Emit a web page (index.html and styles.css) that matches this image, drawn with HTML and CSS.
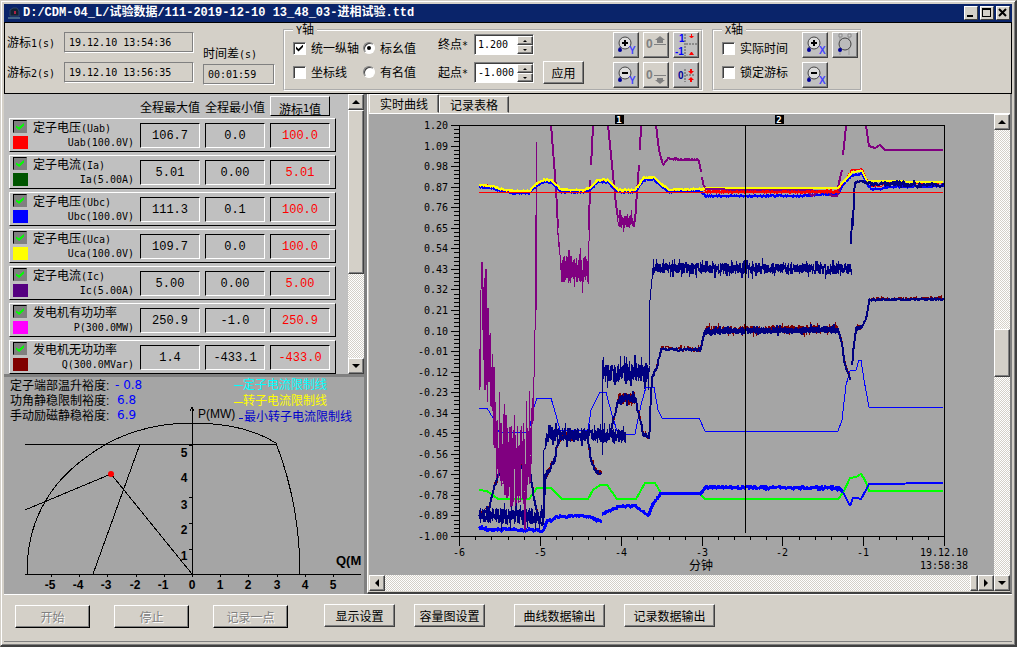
FILE: index.html
```
<!DOCTYPE html>
<html lang="zh-CN">
<head>
	<meta charset="utf-8">
	<title>进相试验</title>
	<link rel="stylesheet" href="styles.css">
</head>
<body>

<div class="window">

	<header class="titlebar">
		<svg class="app-icon" width="14" height="14" viewBox="0 0 14 14">
			<path d="M3 10V4l3-2h4l2 3v5z" fill="#123" stroke="#346" />
			<path d="M1 11h12v2H1z" fill="#468" />
			<path d="M7 5h2v3H7z" fill="#a24" />
		</svg>
		<h1>D:/CDM-04_L/试验数据/111-2019-12-10 13_48_03-进相试验.ttd</h1>
		<button class="win-btn" aria-label="最小化"><svg width="10" height="10"><path d="M1 7h6v2H1z"/></svg></button>
		<button class="win-btn" aria-label="最大化"><svg width="10" height="10"><path d="M0 0h9v9H0zM1 2v6h7V2z" fill-rule="evenodd"/></svg></button>
		<button class="win-btn" aria-label="关闭"><svg width="10" height="10"><path d="M1 1l7 7M8 1l-7 7" stroke="#000" stroke-width="2"/></svg></button>
	</header>

	<section class="toolbar">
		<div class="cursors">
			<label for="c1">游标<span class="en">1(s)</span></label>
			<input class="field" id="c1" value="19.12.10 13:54:36" readonly>
			<label for="c2">游标<span class="en">2(s)</span></label>
			<input class="field" id="c2" value="19.12.10 13:56:35" readonly>
		</div>
		<div class="diff">
			<label for="diff">时间差<span class="en">(s)</span></label>
			<input class="field" id="diff" value="00:01:59" readonly>
		</div>

		<fieldset class="axis-y">
			<legend><span class="en">Y</span>轴</legend>
			<div class="group">
				<div class="options">
					<label><input type="checkbox" class="box" checked>统一纵轴</label>
					<label><input type="checkbox" class="box">坐标线</label>
				</div>
				<div class="options radios">
					<label><input type="radio" name="unit" class="dot" checked>标幺值</label>
					<label><input type="radio" name="unit" class="dot">有名值</label>
				</div>
				<div class="ranges">
					<label for="end">终点<span class="en">*</span></label>
					<div class="spin">
						<input id="end" value="1.200">
						<div class="steps"><button class="up" aria-label="增"></button><button class="down" aria-label="减"></button></div>
					</div>
					<label for="start">起点<span class="en">*</span></label>
					<div class="spin">
						<input id="start" value="-1.000">
						<div class="steps"><button class="up" aria-label="增"></button><button class="down" aria-label="减"></button></div>
					</div>
				</div>
				<button class="btn apply">应用</button>
				<div class="tools">
					<button class="tool" aria-label="纵轴放大">
						<svg width="24" height="24" viewBox="0 0 24 24">
							<circle cx="11" cy="10" r="6" class="lens"/><path d="M8 10h6M11 7v6" class="sign"/>
							<path d="M7 14l-2 2" class="handle"/><circle cx="6" cy="17" r="2" class="knob"/>
							<text x="15" y="21" class="axis">Y</text>
						</svg>
					</button>
					<button class="tool flat" aria-label="零点上移">
						<svg width="24" height="24" viewBox="0 0 24 24">
							<text x="2" y="15" class="zero">0</text>
							<path d="M10 11h12v1H10zM11 7l5-4 5 4h-2v3h-6V7z" fill="#808080"/>
						</svg>
					</button>
					<button class="tool" aria-label="恢复范围">
						<svg width="24" height="24" viewBox="0 0 24 24">
							<text x="5" y="9" class="num">1</text><text x="1" y="22" class="num">-1</text>
							<path d="M11 1v22M12 11h11" stroke="#555" stroke-dasharray="2 1"/>
							<path d="M15 3h5l-2 2h-1zM17 1h1v2h-1zM15 22h5l-2-3h-1z" fill="#f00"/>
						</svg>
					</button>
					<button class="tool" aria-label="纵轴缩小">
						<svg width="24" height="24" viewBox="0 0 24 24">
							<circle cx="11" cy="10" r="6" class="lens"/><path d="M8 10h6" class="sign"/>
							<path d="M7 14l-2 2" class="handle"/><circle cx="6" cy="17" r="2" class="knob"/>
							<text x="15" y="21" class="axis">Y</text>
						</svg>
					</button>
					<button class="tool flat" aria-label="零点下移">
						<svg width="24" height="24" viewBox="0 0 24 24">
							<text x="2" y="16" class="zero">0</text>
							<path d="M10 12h12v1H10zM11 17h2v-2h6v2h2l-5 4z" fill="#808080"/>
						</svg>
					</button>
					<button class="tool" aria-label="归零">
						<svg width="24" height="24" viewBox="0 0 24 24">
							<text x="4" y="16" class="num dark">0</text>
							<path d="M11 6v13M12 12h9" stroke="#555" stroke-dasharray="2 1"/>
							<path d="M14 8h2V6h2v2h2l-3 3zM14 17h2v2h2v-2h2l-3-3z" fill="#f00"/>
						</svg>
					</button>
				</div>
			</div>
		</fieldset>

		<fieldset class="axis-x">
			<legend><span class="en">X</span>轴</legend>
			<div class="group">
				<div class="options">
					<label><input type="checkbox" class="box">实际时间</label>
					<label><input type="checkbox" class="box">锁定游标</label>
				</div>
				<div class="tools two">
					<button class="tool" aria-label="横轴放大">
						<svg width="24" height="24" viewBox="0 0 24 24">
							<circle cx="11" cy="10" r="6" class="lens"/><path d="M8 10h6M11 7v6" class="sign"/>
							<path d="M7 14l-2 2" class="handle"/><circle cx="6" cy="17" r="2" class="knob"/>
							<text x="16" y="21" class="axis">X</text>
						</svg>
					</button>
					<button class="tool" aria-label="游标区间放大">
						<svg width="24" height="24" viewBox="0 0 24 24">
							<path d="M7 4v18M16 4v18" stroke="#999"/><path d="M6 1h3v3H6zM15 1h3v3h-3z" fill="#ccc" stroke="#888"/>
							<circle cx="12" cy="11" r="6" class="lens wide"/>
							<path d="M8 15l-1 1" class="handle"/><circle cx="7" cy="17" r="2" class="knob"/>
						</svg>
					</button>
					<button class="tool" aria-label="横轴缩小">
						<svg width="24" height="24" viewBox="0 0 24 24">
							<circle cx="11" cy="10" r="6" class="lens"/><path d="M8 10h6" class="sign"/>
							<path d="M7 14l-2 2" class="handle"/><circle cx="6" cy="17" r="2" class="knob"/>
							<text x="16" y="21" class="axis">X</text>
						</svg>
					</button>
				</div>
			</div>
		</fieldset>
	</section>

	<main>
		<aside>
			<div class="list">
				<table>
					<thead>
						<tr><th></th><th>全程最大值</th><th>全程最小值</th><th class="key">游标<span class="en">1</span>值</th></tr>
					</thead>
					<tbody>
						<tr>
							<th><input type="checkbox" id="s1" checked><label for="s1">定子电压<span class="en">(Uab)</span></label><i class="red"></i><span class="en unit">Uab(100.0V)</span></th>
							<td>106.7</td><td>0.0</td><td>100.0</td>
						</tr>
						<tr>
							<th><input type="checkbox" id="s2" checked><label for="s2">定子电流<span class="en">(Ia)</span></label><i class="green"></i><span class="en unit">Ia(5.00A)</span></th>
							<td>5.01</td><td>0.00</td><td>5.01</td>
						</tr>
						<tr>
							<th><input type="checkbox" id="s3" checked><label for="s3">定子电压<span class="en">(Ubc)</span></label><i class="blue"></i><span class="en unit">Ubc(100.0V)</span></th>
							<td>111.3</td><td>0.1</td><td>100.0</td>
						</tr>
						<tr>
							<th><input type="checkbox" id="s4" checked><label for="s4">定子电压<span class="en">(Uca)</span></label><i class="yellow"></i><span class="en unit">Uca(100.0V)</span></th>
							<td>109.7</td><td>0.0</td><td>100.0</td>
						</tr>
						<tr>
							<th><input type="checkbox" id="s5" checked><label for="s5">定子电流<span class="en">(Ic)</span></label><i class="indigo"></i><span class="en unit">Ic(5.00A)</span></th>
							<td>5.00</td><td>0.00</td><td>5.00</td>
						</tr>
						<tr>
							<th><input type="checkbox" id="s6" checked><label for="s6">发电机有功功率</label><i class="magenta"></i><span class="en unit">P(300.0MW)</span></th>
							<td>250.9</td><td>-1.0</td><td>250.9</td>
						</tr>
						<tr>
							<th><input type="checkbox" id="s7" checked><label for="s7">发电机无功功率</label><i class="maroon"></i><span class="en unit">Q(300.0MVar)</span></th>
							<td>1.4</td><td>-433.1</td><td>-433.0</td>
						</tr>
					</tbody>
				</table>
				<div class="scroll vertical">
					<button class="up" aria-label="上"></button>
					<div class="thumb"></div>
					<div class="track"></div>
					<button class="down" aria-label="下"></button>
				</div>
			</div>

			<!-- P-Q capability diagram -->
			<svg class="capacity" viewBox="4 377 360 216">
				<g class="notes">
					<text x="10" y="390">定子端部温升裕度:</text><text x="115" y="389" class="value">- 0.8</text>
					<text x="10" y="405">功角静稳限制裕度:</text><text x="117" y="404" class="value">6.8</text>
					<text x="10" y="420">手动励磁静稳裕度:</text><text x="117" y="419" class="value">6.9</text>
					<g fill="#0ff"><path d="M234 385h9v1h-9z"/><text x="243" y="389">定子电流限制线</text></g>
					<g fill="#ff0"><path d="M234 402h9v1h-9z"/><text x="243" y="405">转子电流限制线</text></g>
					<g fill="#00c"><path d="M239 418h4v1h-4z"/><text x="244" y="421">最小转子电流限制线</text></g>
				</g>
				<g class="thin">
					<path d="M25 574H361M192 408V574M25 444H276"/>
					<path d="M190 411l2-4 2 4"/>
					<path d="M27 574C27 548 33 522 45 502C58 478 82 458 108 443C135 429 166 423 192 423C220 423 252 428 276 443C291 482 300 528 300 574"/>
					<path d="M140 444L93 574M25 510L111 474L192 574"/>
					<path d="M189 445h3M189 497h3M189 523h3M189 549h3"/>
					<path id="pqTicks"/>
				</g>
				<circle cx="111" cy="474" r="3" fill="#f00"/>
				<g class="scale" id="pqLabels">
					<text x="184" y="457">5</text><text x="184" y="482">4</text><text x="184" y="509">3</text>
					<text x="184" y="534">2</text><text x="184" y="560">1</text>
				</g>
				<text x="198" y="418" class="name">P(MW)</text>
				<text x="336" y="565" class="name big">Q(M</text>
			</svg>
		</aside>

		<section class="view">
			<div class="tabs" role="tablist">
				<button role="tab" class="tab active" aria-selected="true">实时曲线</button>
				<button role="tab" class="tab" aria-selected="false">记录表格</button>
			</div>
			<div class="plot">
				<svg class="chart" id="chart" viewBox="369 114 625 461">
					<g id="curves"></g>
					<path class="line" id="grid" d="M459 125H944V536M459 125V536H944M745 125V533"/>
					<g id="labels"></g>
					<path d="M615 115h9v9h-9zM775 115h9v9h-9z"/>
					<g class="marks"><text x="619" y="123">1</text><text x="779" y="123">2</text></g>
					<text class="cjk" x="701" y="570">分钟</text>
				</svg>
				<div class="scroll vertical right">
					<button class="up" aria-label="上"></button>
					<div class="track"></div>
					<div class="thumb"></div>
					<div class="track"></div>
				</div>
				<div class="scroll horizontal">
					<button class="left" aria-label="左"></button>
					<div class="track"></div>
					<div class="thumb"></div>
					<button class="next" aria-label="右"></button>
				</div>
				<div class="scroll"><button class="down" aria-label="下"></button></div>
			</div>
		</section>
	</main>

	<footer>
		<div class="run">
			<button class="btn" disabled>开始</button>
			<button class="btn" disabled>停止</button>
			<button class="btn" disabled>记录一点</button>
		</div>
		<div class="setup">
			<button class="btn">显示设置</button>
			<button class="btn">容量图设置</button>
		</div>
		<div class="export">
			<button class="btn">曲线数据输出</button>
			<button class="btn">记录数据输出</button>
		</div>
	</footer>

</div>

<script src="chart.js"></script>
</body>
</html>
```
FILE: styles.css
```
*{
	box-sizing: border-box;
}
body{
	margin: 0;
	background: #d4d0c8;
	color: #000;
	font: 12px/14px "Noto Sans CJK SC", sans-serif;
}
button, input{
	font: inherit;
	color: inherit;
	margin: 0;
	padding: 0;
	border-radius: 0;
}
button{
	background: #d4d0c8;
}
svg{
	display: block;
}
.en{
	font-family: "DejaVu Sans Mono", monospace;
	font-size: 10px;
}

/* window frame */
.window{
	display: flex;
	flex-direction: column;
	min-height: 100vh;
	padding: 3px 3px 3px 3px;
	border: 1px solid #404040;
	border-width: 1px 2px 2px 1px;
	border-top-color: #d4d0c8;
	border-left-color: #d4d0c8;
	box-shadow: inset 1px 1px #fff, inset -1px -1px #808080;
}
.titlebar{
	display: flex;
	align-items: center;
	gap: 2px;
	height: 18px;
	padding: 0 2px 0 3px;
	background: #0a246a;
	color: #fff;
}
.titlebar h1{
	flex: 1;
	margin: 0;
	font: bold 12px/18px "Liberation Mono", "Noto Sans CJK SC", monospace;
	white-space: nowrap;
}
.win-btn{
	width: 14px;
	height: 14px;
	padding: 1px;
	border: 1px solid;
	border-color: #fff #404040 #404040 #fff;
}

/* toolbar */
.toolbar{
	display: flex;
	align-items: flex-start;
	height: 72px;
	padding-left: 2px;
	border: 1px solid #000;
}
.cursors{
	display: grid;
	grid-template-columns: 57px 130px;
	row-gap: 9px;
	padding-top: 9px;
	align-items: center;
}
.field{
	height: 21px;
	padding: 0 4px;
	background: none;
	border: 1px solid;
	border-color: #808080 #fff #fff #808080;
	outline: 0;
	box-shadow: inset -1px -1px #808080;
	font: 10px "DejaVu Sans Mono", monospace;
}
.diff{
	display: flex;
	flex-direction: column;
	gap: 2px;
	width: 72px;
	margin: 23px 8px 0 9px;
}
.diff .field{
	width: 100%;
}
fieldset{
	min-width: 0;
	margin: 0;
	padding: 0 2px 1px 8px;
	border: 2px groove #fff;
}
legend{
	padding: 0 3px;
	line-height: 12px;
}
.axis-x{
	margin-left: 9px;
}
.group{
	display: flex;
	align-items: flex-start;
	margin-top: -5px;
	white-space: nowrap;
}
.options{
	display: flex;
	flex-direction: column;
	gap: 10px;
	width: 70px;
	padding-top: 9px;
}
.options label{
	display: flex;
	align-items: center;
	gap: 5px;
}
.radios{
	width: 75px;
}
.box, .dot{
	appearance: none;
	flex: none;
	width: 13px;
	height: 13px;
	background: #fff;
	border: 1px solid;
	border-color: #808080 #fff #fff #808080;
	box-shadow: inset 1px 1px #404040;
}
.box:checked::before{
	content: "";
	display: block;
	width: 7px;
	height: 7px;
	margin: 2px;
	background: #000;
	clip-path: polygon(0 28%, 36% 64%, 100% 0, 100% 36%, 36% 100%, 0 64%);
}
.dot{
	width: 12px;
	height: 12px;
	border-radius: 50%;
}
.dot:checked::before{
	content: "";
	display: block;
	width: 4px;
	height: 4px;
	margin: 3px;
	background: #000;
	border-radius: 50%;
}
.ranges{
	display: grid;
	grid-template-columns: 36px 60px;
	row-gap: 7px;
	align-items: center;
	padding-top: 2px;
}
.spin{
	display: flex;
	height: 21px;
	background: #fff;
	border: 1px solid;
	border-color: #808080 #fff #fff #808080;
	box-shadow: inset 1px 1px #404040;
}
.spin input{
	flex: 1;
	min-width: 0;
	padding-left: 3px;
	background: none;
	border: 0;
	font: 10px "DejaVu Sans Mono", monospace;
}
.steps{
	width: 16px;
	padding-top: 1px;
}
.steps button{
	width: 16px;
	height: 9px;
}
.btn{
	height: 23px;
	padding: 0;
	border: 1px solid;
	border-color: #fff #404040 #404040 #fff;
	box-shadow: inset -1px -1px #808080;
}
.btn:disabled{
	color: #808080;
	text-shadow: 1px 1px #fff;
	border-color: #fff #000 #000 #fff;
}
.apply{
	width: 41px;
	margin: 29px 29px 0 9px;
}
.tools{
	display: grid;
	grid-template-columns: repeat(3, 26px);
	gap: 4px;
}
.tools.two{
	grid-template-columns: repeat(2, 26px);
	margin-left: 10px;
}
.tool{
	height: 26px;
	background: #c0c0c0;
	border: 1px solid;
	border-color: #fff #404040 #404040 #fff;
	box-shadow: inset -1px -1px #808080;
}
.tool.flat{
	background: #d4d0c8;
}
.lens{
	fill: #ddd;
	stroke: #444;
	stroke-width: 1px;
}
.wide{
	fill: #bbb;
}
.sign{
	stroke: #000;
	stroke-width: 2px;
	shape-rendering: crispEdges;
}
.handle{
	stroke: #448;
	stroke-width: 2px;
}
.knob{
	fill: #009;
}
.axis{
	fill: #44f;
	font: bold 10px "Liberation Sans", sans-serif;
}
.zero{
	fill: #808080;
	font: bold 12px "Liberation Sans", sans-serif;
}
.num{
	fill: #00f;
	font: bold 10px "Liberation Sans", sans-serif;
}
.num.dark{
	fill: #009;
}

/* scrollbars */
.scroll{
	display: flex;
}
.vertical{
	flex-direction: column;
}
.scroll button, .steps button, .thumb{
	display: flex;
	flex: none;
	align-items: center;
	justify-content: center;
	background: #d4d0c8;
	border: 1px solid;
	border-color: #fff #404040 #404040 #fff;
	box-shadow: inset -1px -1px #808080;
}
.scroll button{
	width: 16px;
	height: 16px;
}
.up::before, .down::before, .left::before, .next::before{
	content: "";
	border: 4px solid transparent;
}
.up::before{
	border-top: 0;
	border-bottom-color: #000;
}
.down::before{
	border-bottom: 0;
	border-top-color: #000;
}
.left::before{
	border-left: 0;
	border-right-color: #000;
}
.next::before{
	border-right: 0;
	border-left-color: #000;
}
.steps button::before{
	border-width: 2px;
}
.steps .up::before{
	border-top: 0;
}
.steps .down::before{
	border-bottom: 0;
}
.track{
	flex: 1;
	background: conic-gradient(#fff 25%, #d4d0c8 0 50%, #fff 0 75%, #d4d0c8 0) 0 0 / 2px 2px;
}

/* left side */
main{
	display: flex;
	flex: 1;
}
aside{
	display: flex;
	flex-direction: column;
	flex: none;
	width: 363px;
	border-right: 3px solid #808080;
	background: #a5a5a5;
}
.list{
	display: flex;
	justify-content: space-between;
	height: 283px;
	padding-left: 5px;
	background: #c0c0c0;
	border-bottom: 3px solid #808080;
}
.list .thumb{
	height: 164px;
}
table, thead, tbody{
	display: block;
}
tbody{
	display: grid;
	gap: 3px;
}
tr{
	display: grid;
	grid-template-columns: 125px 60px 60px 60px;
	column-gap: 5px;
	width: 327px;
}
th{
	padding: 0;
	font-weight: normal;
	text-align: center;
	white-space: nowrap;
}
thead tr{
	height: 24px;
	padding: 2px 0 2px 1px;
}
thead th{
	display: flex;
	justify-content: center;
	padding-top: 4px;
}
.key{
	overflow: hidden;
	padding-top: 5px;
	border: 1px solid;
	border-color: #fff #000 #000 #fff;
}
tbody tr{
	height: 34px;
	padding-top: 4px;
	border: 1px solid;
	border-color: #fff #000 #000 #fff;
}
tbody th{
	display: grid;
	grid-template-columns: 15px 1fr;
	grid-template-rows: 15px 14px;
	column-gap: 5px;
	margin-top: -3px;
	padding-left: 3px;
	text-align: left;
}
tbody input{
	appearance: none;
	width: 14px;
	height: 13px;
	background: #808080;
	border: 1px solid;
	border-color: #000 #808080 #808080 #000;
}
tbody input:checked::before{
	content: "";
	display: block;
	width: 8px;
	height: 7px;
	margin: 2px;
	background: #0f0;
	clip-path: polygon(0 35%, 36% 60%, 100% 0, 100% 36%, 40% 100%, 0 65%);
}
i{
	height: 13px;
	margin-top: 1px;
}
.red{ background: #f00; }
.green{ background: #005500; }
.blue{ background: #00f; }
.yellow{ background: #ff0; }
.indigo{ background: #550080; }
.magenta{ background: #f0f; }
.maroon{ background: #800000; }
.unit{
	margin-right: 1px;
	line-height: 16px;
	text-align: right;
}
td{
	height: 25px;
	padding: 0;
	border: 1px solid;
	border-color: #000 #fff #fff #000;
	font: 12px/25px "Liberation Mono", monospace;
	text-align: center;
}
td:last-child{
	color: #f00;
}
.capacity{
	width: 100%;
}
.notes{
	font: 12px "Liberation Sans", "Noto Sans CJK SC", sans-serif;
}
.capacity .value{
	fill: #00f;
	font: 12px "DejaVu Sans", sans-serif;
}
.thin{
	fill: none;
	stroke: #000;
	shape-rendering: crispEdges;
}
.scale{
	font: bold 12px "Liberation Sans", sans-serif;
	text-anchor: middle;
}
.name{
	font: 12px "Liberation Sans", sans-serif;
}
.capacity .big{
	font-size: 13px;
	font-weight: bold;
}

/* right side */
.view{
	flex: 1;
	min-width: 0;
	padding-left: 1px;
	border-left: 1px solid #fff;
	border-right: 2px solid #808080;
	border-bottom: 2px solid #404040;
}
.tabs{
	display: flex;
	align-items: flex-end;
	height: 20px;
	border-bottom: 1px solid #fff;
}
.tab{
	width: 70px;
	height: 17px;
	border: 1px solid;
	border-color: #fff #404040 #d4d0c8 #fff;
	box-shadow: inset -1px 0 #808080;
}
.tab.active{
	height: 19px;
}
.plot{
	display: grid;
	grid-template-columns: 1fr 16px;
}
.chart{
	width: 100%;
	background: #a5a5a5;
	font: 10px "DejaVu Sans Mono", monospace;
}
.right .thumb{
	height: 48px;
}
.right .track:last-child{
	flex: none;
	height: 43%;
}
.horizontal .thumb{
	width: 8px;
}
.line, .curve{
	fill: none;
	stroke: #000;
	shape-rendering: crispEdges;
}
.curve{
	stroke-linejoin: bevel;
}
.cjk{
	font: 12px "Liberation Sans", "Noto Sans CJK SC", sans-serif;
	text-anchor: middle;
}
.marks{
	fill: #fff;
	font: bold 9px "DejaVu Sans Mono", monospace;
	text-anchor: middle;
}

/* bottom buttons */
footer{
	display: flex;
	gap: 36px;
	height: 48px;
	padding: 9px 11px;
	border-top: 1px solid #fff;
	border-bottom: 1px solid #808080;
}
.run, .setup, .export{
	display: flex;
}
.run{
	gap: 24px;
	padding-top: 1px;
}
.run .btn{
	width: 75px;
}
.setup{
	gap: 19px;
}
.setup .btn{
	width: 71px;
}
.export{
	gap: 19px;
	margin-left: -7px;
}
.export .btn{
	width: 91px;
}
```
FILE: chart.js
```
const NS = 'http://www.w3.org/2000/svg';
const curves = document.getElementById('curves');
const labels = document.getElementById('labels');
const grid = document.getElementById('grid');

function addText(parent, x, y, text, anchor){
	let t = document.createElementNS(NS, 'text');
	t.setAttribute('x', x);
	t.setAttribute('y', y);
	t.setAttribute('text-anchor', anchor);
	t.textContent = text;
	parent.appendChild(t);
}

// axes
let ticks = '';
for(let i = 0; i <= 100; i++){
	let y = Math.round(125 + i * 4.11);
	ticks += 'M' + (i % 5 ? 454 : 451) + ' ' + y + 'H459';
	if(i % 5 == 0) addText(labels, 448, y + 4, (1.2 - i * 0.022).toFixed(2), 'end');
}
for(let i = 0; i <= 30; i++){
	let x = Math.round(459 + i * 16.17);
	ticks += 'M' + x + ' 536V' + (i % 5 ? 540 : 546);
	if(i % 5 == 0 && i < 30) addText(labels, x, 556, i / 5 - 6, 'middle');
}
addText(labels, 944, 556, '19.12.10', 'middle');
addText(labels, 944, 569, '13:58:38', 'middle');
grid.setAttribute('d', grid.getAttribute('d') + ticks);

let pq = '';
for(let i = -5; i <= 5; i++){
	let x = Math.round(192 + i * 28.2);
	pq += 'M' + x + ' 574v3';
	addText(document.getElementById('pqLabels'), i < 0 ? x - 1 : x, 589, i, 'middle');
}
document.getElementById('pqTicks').setAttribute('d', pq);

// repeatable noise
let seed = 7;
function rand(){
	seed = (seed * 16807) % 2147483647;
	return seed / 2147483647;
}

// points are "x,y,noise"; "|" starts a new segment
function curve(color, width, data, dy = 0, extra = 0){
	let d = '';
	for(const part of data.split('|')){
		const pts = part.trim().split(/\s+/).map(p => p.split(',').map(Number));
		d += 'M' + pts[0][0] + ' ' + (pts[0][1] + dy);
		for(let i = 1; i < pts.length; i++){
			const [x0, y0, n0 = 0] = pts[i - 1];
			const [x1, y1] = pts[i];
			const steps = Math.max(1, n0 ? (x1 - x0) * (n0 > 3 ? 5 : 2) : 1);
			for(let s = 1; s <= steps; s++){
				const k = s / steps;
				// mostly small wiggles, now and then a spike
				let r = rand() * 2 - 1;
				const amp = (n0 + (n0 ? extra : 0)) * (rand() > 0.9 ? 1.5 : 0.8);
				d += 'L' + Math.round(x0 + (x1 - x0) * k) + ' ' + Math.round(y0 + (y1 - y0) * k + r * amp + dy);
			}
		}
	}
	const path = document.createElementNS(NS, 'path');
	path.setAttribute('class', 'curve');
	path.setAttribute('d', d);
	path.style.stroke = color;
	path.style.strokeWidth = width;
	curves.appendChild(path);
}

const volt = '479,186,1 492,187,1 500,190,1 512,192,1 529,192,1 536,185,1 543,181,1 551,181,1 556,186,1 561,191,1 585,191,1 592,187,1 597,181,1 608,181,1 613,187,1 618,191,1 635,191,1 643,179,1 653,178,1 662,186,1 669,191,1 701,190,1 ';
const power = '479,516,2 489,508,2 493,490,2 499,472,2 512,467,2 529,467,2 534,500,2 538,517,2 541,524,2 543,524,1 545,478,4 549,470,3 554,460,3 558,443,3 561,438,3 587,436,3 591,460,3 595,471,3 601,475,3 | 602,441,3 608,438,3 612,425,3 618,400,6 635,398,3 639,417,3 643,434,3 649,438,2 650,415 652,378,2 657,366,2 661,349,2 700,350,2 705,331,4 838,330,1 842,345,1 844,362,1 850,380,1 | 852,365,1 853,350,1 856,328,2 862,327,1 866,318,1 869,300,1 943,299';

curve('#0f0', 2, '479,490 487,491 498,499 529,499 537,488 551,488 562,499 588,499 593,490 600,485 607,485 617,499 636,499 645,483 655,483 661,493 700,494 705,499 838,499 843,493 850,478 856,477 861,474 865,480 869,491 943,491');
curve('#00f', 1, '479,408 487,408 493,418 499,432 529,432 533,410 537,398 551,398 556,415 560,430 588,430 591,410 600,392 606,392 612,415 618,434 635,434 641,405 646,387 654,387 658,410 662,418 699,418 705,431 838,431 842,420 846,385 850,371 856,370 859,360 861,360 864,380 869,407 943,407');
curve('#00f', 3, '479,529,2 543,530,1 546,522,2 560,516,2 590,516,2 601,522 | 602,514,1 610,510,2 620,506,2 635,506,1 648,516,1 652,505,1 660,494 700,494,1 706,487,2 838,488 843,492');
curve('#00f', 2, '843,492 850,506 853,498 857,498 861,499 866,490 869,484 943,483');
curve('#800000', 1, power, -1, 1);
curve('#000080', 2, power);
curve('#000080', 1, '479,516,10 543,516 544,450,6 547,434,9 625,436,7 | 602,455 602,360 602,373,12 649,372 650,300 653,268,7 851,269');
curve('#800080', 1, '479,348 480,390 481,290 482,262 482,330,60 484,340,80 488,350,75 490,365,60 493,405,55 498,455,48 508,465,52 530,462,46 532,420,24 534,380 535,330 535,215 536,310 536,142 | 556,188 558,235,8 561,269,17 588,270,8 589,230 590,180 | 616,205 618,222,8 635,221');
curve('#800080', 2, '551,125 553,150 556,188 558,228 | 589,230 590,180 | 591,165 592,148 593,125 | 608,125 611,155 614,185 616,205 618,218 | 635,221 637,192 639,165 | 640,150 641,125 | 656,125 659,150 663,165 669,157 | 669,159,1 699,160 701,172 | 702,177 704,188,1 805,190,2 835,194,2 838,188 842,170 | 843,155 845,137 846,125 | 866,125 869,146 875,148 880,145 885,150 943,150');
curve('#00f', 2, volt + '705,195,1 800,195,1 838,193,1 843,183,1 852,174,1 862,173,1 867,184,1 871,188,1 880,188,1 886,186,1 943,185', 1);
curve('#f00', 1, volt + '705,191,2 800,192,2 838,192,1 843,183,1 851,171,1 862,170,1 866,180,1 871,187,1 880,187,1 886,184,1 943,184', -1);
curve('#ff0', 2, volt + '705,190 838,189 843,183,1 852,173 862,172 867,182 943,183', -1);
curve('#800080', 2, '705,189 745,190 805,190 812,196 820,191 | 828,191 832,196 837,196 840,189');
curve('#f00', 2, '705,192,1 838,192');
curve('#000080', 2, '851,244 852,218 853,226 854,195 855,182,1 862,181,1 868,184,3 943,185');
curve('#f00', 1, '479,192 943,192');
```
